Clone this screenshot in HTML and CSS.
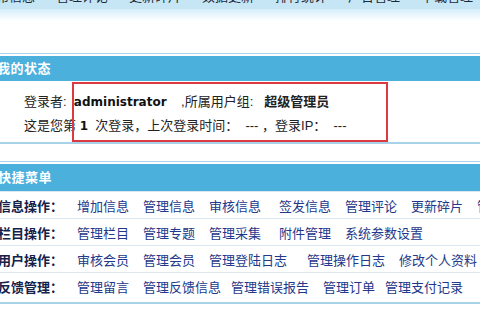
FILE: index.html
```html
<!DOCTYPE html>
<html lang="zh-CN">
<head>
<meta charset="utf-8">
<title>我的状态</title>
<link rel="stylesheet" href="styles.css">
</head>
<body>
<div class="topnav">
  <div class="navitems">
    <span>发布信息</span><span>管理评论</span><span>更新碎片</span><span>数据更新</span><span>排行统计</span><span>广告管理</span><span>下载管理</span>
  </div>
</div>
<div class="navfade"></div>

<section class="panel status">
  <div class="panel-head">我的状态</div>
  <div class="status-body">
    <div class="line">登录者:&nbsp;&nbsp;<b class="latin">administrator</b>&nbsp;&nbsp;&nbsp;&nbsp;,所属用户组:&nbsp;&nbsp;&nbsp;<b>超级管理员</b></div>
    <div class="line">这是您第&nbsp;<b class="latin">1</b>&nbsp;&nbsp;次登录，上次登录时间：&nbsp;&nbsp;---&nbsp;，登录IP：&nbsp;&nbsp;---</div>
  </div>
</section>

<section class="panel menu">
  <div class="panel-head">快捷菜单</div>
  <div class="row">
    <span class="label">信息操作：</span>
    <a>增加信息</a><a>管理信息</a><a>审核信息</a><a class="w">签发信息</a><a>管理评论</a><a>更新碎片</a><a>管理</a>
  </div>
  <div class="row">
    <span class="label">栏目操作：</span>
    <a>管理栏目</a><a>管理专题</a><a>管理采集</a><a class="w">附件管理</a><a>系统参数设置</a>
  </div>
  <div class="row">
    <span class="label">用户操作：</span>
    <a>审核会员</a><a>管理会员</a><a class="x">管理登陆日志</a><a>管理操作日志</a><a>修改个人资料</a>
  </div>
  <div class="row">
    <span class="label">反馈管理：</span>
    <a>管理留言</a><a class="n">管理反馈信息</a><a>管理错误报告</a><a class="n">管理订单</a><a>管理支付记录</a>
  </div>
</section>

<div class="mark"></div>
</body>
</html>
```

FILE: styles.css
```css
html, body {
  margin: 0;
  padding: 0;
  background: #ffffff;
}
body {
  position: relative;
  width: 480px;
  height: 320px;
  overflow: hidden;
  font-family: "Liberation Sans", "Noto Sans CJK SC", sans-serif;
  font-size: 13px;
  color: #222;
}
.topnav {
  height: 9px;
  overflow: hidden;
  background: #c6e6f6;
}
.navitems {
  display: flex;
  gap: 21px;
  margin-left: -17px;
  margin-top: -12px;
  line-height: 18px;
  color: #1d2a3a;
  white-space: nowrap;
}
.navfade {
  height: 12px;
  background: linear-gradient(#d4eefa, #ffffff);
}
.panel {
  margin-left: -8px;
  width: 500px;
  border-top: 1px solid #a9d7ee;
  border-bottom: 2px solid #a6d3ea;
}
.status {
  margin-top: 32px;
}
.menu {
  margin-top: 17px;
  padding-bottom: 3px;
}
.panel-head {
  margin-top: 2px;
  height: 25px;
  line-height: 25px;
  background: #4cb0dd;
  color: #ffffff;
  font-weight: bold;
  padding-left: 5px;
  letter-spacing: 0.5px;
}
.menu .panel-head {
  height: 27px;
  line-height: 27px;
  padding-left: 6px;
}
.status-body {
  padding: 9px 0 4px 32px;
}
.line {
  line-height: 23px;
  white-space: nowrap;
}
.latin {
  font-family: "DejaVu Sans", "Noto Sans CJK SC", sans-serif;
  font-size: 12px;
  color: #111;
}
.row {
  display: flex;
  align-items: center;
  height: 26px;
  border-top: 1px solid #dde7f0;
  white-space: nowrap;
  padding-left: 6px;
}
.row:first-of-type {
  border-top: none;
}
.label {
  width: 79px;
  flex: none;
  font-weight: bold;
  color: #14214a;
}
.row a {
  color: #23388a;
  margin-right: 14px;
  flex: none;
}
.row a.w {
  margin-left: 4px;
}
.row a.n {
  margin-right: 10px;
}
.row a.x {
  margin-right: 20px;
}
.mark {
  position: absolute;
  left: 72px;
  top: 82px;
  width: 312px;
  height: 56px;
  border: 2px solid #dc3a40;
}
```
